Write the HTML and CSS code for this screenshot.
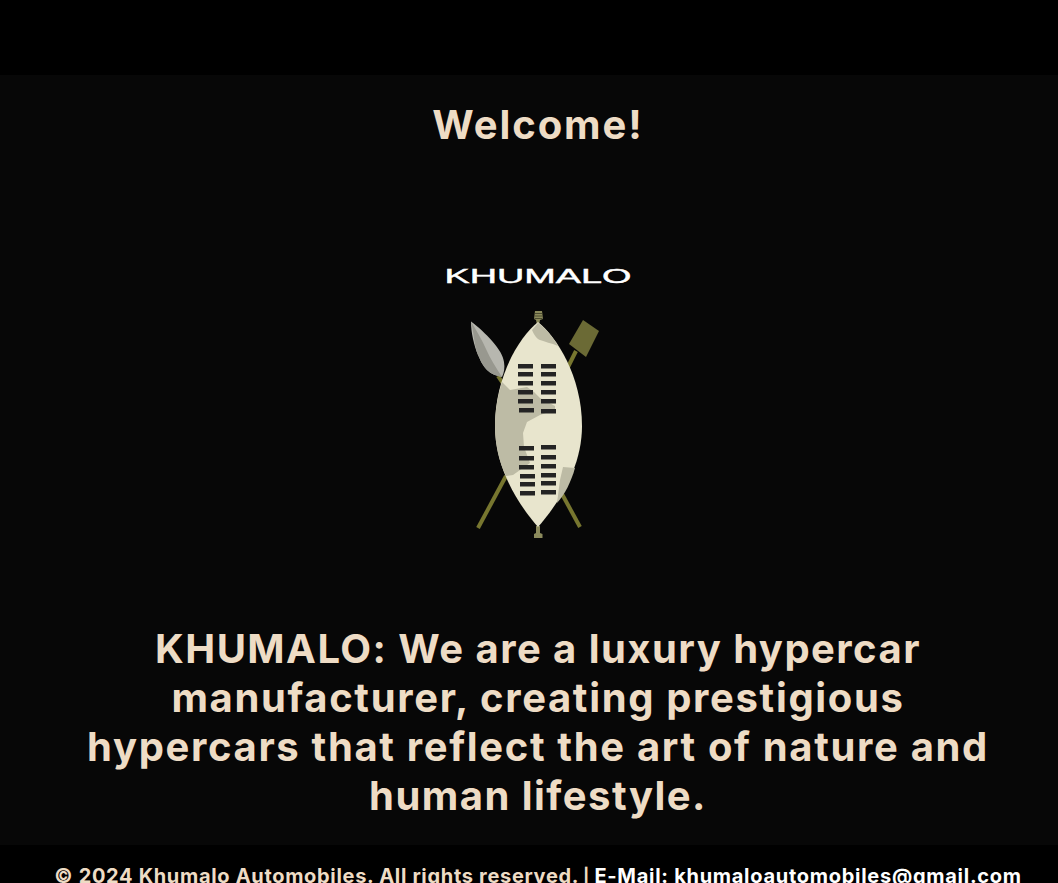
FILE: index.html
```html
<!DOCTYPE html>
<html lang="en">
<head>
<meta charset="utf-8">
<title>Khumalo Automobiles</title>
<link rel="stylesheet" href="styles.css">
</head>
<body>
<header class="topbar"></header>
<main class="hero">
  <h1 class="welcome">Welcome!</h1>
  <svg class="logo" viewBox="388 230 300 330" width="300" height="330" role="img" aria-label="Khumalo logo">
    <text class="logo-word" x="444.500" y="283" textLength="187" lengthAdjust="spacingAndGlyphs">KHUMALO</text>
    <!-- spear -->
    <path class="stick" d="M498 376 L504 385"/>
    <path class="blade" d="M471 321.500 C485 332 503 350 504 362 C505 368 504 373 502 377 C497 376 491 374 487 370 C482 365 480 359 478 355 C474 345 471 333 471 321.500 Z"/>
    <path class="blade-shade" d="M471 321.500 C474 333 474 345 478 355 C480 359 482 365 487 370 C491 374 497 376 502 377 C496 368 490 358 486 349 C482 340 476 330 471 321.500 Z"/>
    <!-- club -->
    <path class="stick" d="M576 351 L568 367"/>
    <path class="paddle" d="M583 320 L599 331 L586 357 L569 344 Z"/>
    <!-- lower sticks -->
    <path class="stick" d="M506 476 L478 528"/>
    <path class="stick" d="M562 494 L580 527"/>
    <!-- knobs -->
    <path class="knob" d="M535 311 H542 L543 319 L540 320 L539 325 H537 L536 320 L534 319 Z"/>
    <path class="knob-line" d="M534.500 313.500 H542.500 M534.500 316 H542.500 M534.500 318.500 H542.500"/>
    <path class="knob" d="M536 526 H540 V533 L542.500 534 V538 H534 V534 L536 533 Z"/>
    <!-- shield -->
    <path class="hide" d="M538 322 C556 336 582 376 582 426 C582 468 558 504 538 527 C518 504 495 468 495 426 C495 376 520 336 538 322 Z"/>
    <path class="patch" d="M538 323 L532 330 C534 335 537 339 540 340 C545 342 551 343 558 346 C553 337 546 329 538 323 Z"/>
    <path class="patch" d="M502 382 L510 390 L527 387 L534 392 L540 398 L555 406 L555 410 L540 415 L527 422 L523 433 L524 447 L530 463 L513 475 L506 476 C499 462 495 444 495 426 C495 410 498 395 502 382 Z"/>
    <path class="patch" d="M575 468 L563 467 L560 480 L557 503 C565 494 571 482 575 468 Z"/>
    <!-- bars -->
    <g class="bars">
      <rect x="518" y="364" width="15" height="4.500"/><rect x="541" y="364" width="15" height="4.500"/>
      <rect x="518" y="372" width="15" height="4.500"/><rect x="541" y="372" width="15" height="4.500"/>
      <rect x="518" y="381" width="15" height="4.500"/><rect x="541" y="381" width="15" height="4.500"/>
      <rect x="518" y="390" width="15" height="4.500"/><rect x="541" y="390" width="15" height="4.500"/>
      <rect x="518" y="399" width="15" height="4.500"/><rect x="541" y="399" width="15" height="4.500"/>
      <rect x="519" y="408" width="15" height="4.500"/><rect x="541" y="409" width="15" height="4.500"/>
      <rect x="519" y="446" width="15" height="4.500"/><rect x="541" y="445" width="15" height="4.500"/>
      <rect x="519" y="456" width="15" height="4.500"/><rect x="541" y="455" width="15" height="4.500"/>
      <rect x="519" y="465" width="15" height="4.500"/><rect x="541" y="464" width="15" height="4.500"/>
      <rect x="520" y="474" width="15" height="4.500"/><rect x="541" y="473" width="15" height="4.500"/>
      <rect x="520" y="482" width="15" height="4.500"/><rect x="541" y="481" width="15" height="4.500"/>
      <rect x="520" y="491" width="15" height="4.500"/><rect x="541" y="490" width="15" height="4.500"/>
    </g>
  </svg>
  <p class="tagline"><span class="line line-a">KHUMALO: We are a luxury hypercar</span><span class="line line-b">manufacturer, creating prestigious</span><span class="line line-b">hypercars that reflect the art of nature and</span><span class="line line-a">human lifestyle.</span></p>
</main>
<footer class="footer">
  <p class="footer-text">© 2024 Khumalo Automobiles. All rights reserved. <span class="sep">|</span> <a class="mail" href="#">E-Mail: khumaloautomobiles@gmail.com</a></p>
</footer>
</body>
</html>
```
FILE: styles.css
```css
html {
  margin: 0;
  background: #000;
  height: 883px;
  overflow: hidden;
}

body {
  margin: 0;
  width: 1076px;
  font-family: Inter, "Open Sans", "Liberation Sans", sans-serif;
  color: #eedcc5;
}

.topbar {
  height: 75px;
  background: #000;
}

.hero {
  height: 770px;
  background: #070707;
  display: flex;
  flex-direction: column;
  align-items: center;
  text-align: center;
}

.welcome {
  margin: 27px 0 0;
  font-size: 40px;
  line-height: 46px;
  font-weight: 700;
  letter-spacing: 1.9px;
}

.logo {
  display: block;
  margin-top: 82px;
}

.logo-word {
  font-family: "Liberation Sans", sans-serif;
  font-size: 19.500px;
  font-weight: 400;
  stroke: #fff;
  stroke-width: 0.400;
  fill: #fff;
}

.stick {
  fill: none;
  stroke: #77762f;
  stroke-width: 4;
}

.blade { fill: #b7b7af; }
.blade-shade { fill: #98988f; }
.paddle { fill: #6b6a35; }
.knob { fill: #8b8a5c; }
.knob-line { fill: none; stroke: #3c3c24; stroke-width: 0.800; }
.hide { fill: #e8e5cd; }
.patch { fill: #bdbba5; }
.bars { fill: #242424; }

.tagline {
  margin: 64px 0 0;
  font-size: 40px;
  line-height: 49px;
  font-weight: 700;
}

.line {
  display: block;
}

.line-a { letter-spacing: 1.450px; }
.line-b { letter-spacing: 1.650px; }

.footer {
  background: #000;
  text-align: center;
}

.footer-text {
  margin: 0;
  padding-top: 19px;
  font-size: 20px;
  line-height: 24px;
  font-weight: 700;
  letter-spacing: 0.680px;
}

.sep {
  margin: 0 -1px;
  font-size: 17px;
}

.mail {
  color: #fff;
  text-decoration: none;
  letter-spacing: 0.720px;
}
```
